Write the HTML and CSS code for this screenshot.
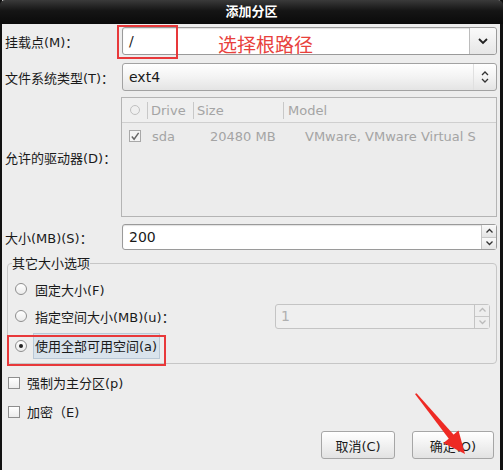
FILE: index.html
```html
<!DOCTYPE html>
<html lang="zh">
<head>
<meta charset="utf-8">
<title>添加分区</title>
<link rel="stylesheet" href="styles.css">
</head>
<body>
<div class="window">
  <div class="titlebar">添加分区</div>
  <div class="content">
    <div class="row r-mount">
      <div class="label">挂载点(M)：</div>
      <div class="combo-entry">
        <div class="entry-text">/</div>
        <div class="combo-btn">
          <svg width="12" height="8" viewBox="0 0 12 8"><path d="M2 2 L6 6 L10 2" fill="none" stroke="#222" stroke-width="1.8"/></svg>
        </div>
      </div>
    </div>
    <div class="row r-fs">
      <div class="label">文件系统类型(T)：</div>
      <div class="combo">
        <div class="entry-text">ext4</div>
        <div class="combo-arrows">
          <svg width="10" height="14" viewBox="0 0 10 14"><path d="M2 5 L5 2 L8 5 M2 9 L5 12 L8 9" fill="none" stroke="#333" stroke-width="1.3"/></svg>
        </div>
      </div>
    </div>
    <div class="row r-drives">
      <div class="label">允许的驱动器(D)：</div>
      <div class="drives">
        <div class="dhead">
          <div class="c0"><span class="hcircle"></span></div>
          <div class="c1">Drive</div>
          <div class="c2">Size</div>
          <div class="c3">Model</div>
        </div>
        <div class="drow">
          <div class="c0"><span class="dcheck"><svg width="11" height="11" viewBox="0 0 11 11"><path d="M2 5.5 L4.5 8.5 L9.5 1.5" fill="none" stroke="#666" stroke-width="1.6"/></svg></span></div>
          <div class="c1">sda</div>
          <div class="c2 num">20480 MB</div>
          <div class="c3">VMware, VMware Virtual S</div>
        </div>
      </div>
    </div>
    <div class="row r-size">
      <div class="label">大小(MB)(S)：</div>
      <div class="spin">
        <div class="entry-text">200</div>
        <div class="spin-btns">
          <div class="sb"><svg width="9" height="6" viewBox="0 0 9 6"><path d="M1.5 4.5 L4.5 1.5 L7.5 4.5" fill="none" stroke="#333" stroke-width="1.3"/></svg></div>
          <div class="sb"><svg width="9" height="6" viewBox="0 0 9 6"><path d="M1.5 1.5 L4.5 4.5 L7.5 1.5" fill="none" stroke="#333" stroke-width="1.3"/></svg></div>
        </div>
      </div>
    </div>
    <fieldset class="frame">
      <legend>其它大小选项</legend>
      <div class="opt o1"><span class="radio"></span><span class="otext">固定大小(F)</span></div>
      <div class="opt o2">
        <span class="radio"></span><span class="otext">指定空间大小(MB)(u)：</span>
        <div class="spin dis">
          <div class="entry-text">1</div>
          <div class="spin-btns">
            <div class="sb"><svg width="9" height="6" viewBox="0 0 9 6"><path d="M1.5 4.5 L4.5 1.5 L7.5 4.5" fill="none" stroke="#bbb" stroke-width="1.3"/></svg></div>
            <div class="sb"><svg width="9" height="6" viewBox="0 0 9 6"><path d="M1.5 1.5 L4.5 4.5 L7.5 1.5" fill="none" stroke="#bbb" stroke-width="1.3"/></svg></div>
          </div>
        </div>
      </div>
      <div class="opt o3"><span class="radio on"></span><span class="otext sel">使用全部可用空间(a)</span></div>
    </fieldset>
    <div class="check c-primary"><span class="box"></span><span>强制为主分区(p)</span></div>
    <div class="check c-enc"><span class="box"></span><span>加密（E)</span></div>
    <div class="buttons">
      <div class="btn b-cancel">取消(C)</div>
      <div class="btn b-ok">确定(O)</div>
    </div>
  </div>
  <div class="anno-box a1"></div>
  <div class="anno-text">选择根路径</div>
  <div class="anno-box a2"></div>
  <svg class="arrow" width="80" height="80" viewBox="0 0 80 80">
    <polygon points="2,2 3.5,1.2 42.5,44.8 37.5,49" fill="#ee2a24"/>
    <polygon points="45.5,38.5 30.5,51 52,62" fill="#ee2a24"/>
  </svg>
</div>
</body>
</html>
```

FILE: styles.css
```css
* { box-sizing: border-box; }
html, body { margin: 0; padding: 0; }
body {
  width: 503px;
  height: 470px;
  overflow: hidden;
  font-family: "DejaVu Sans", "Noto Sans CJK SC", sans-serif;
  font-size: 13px;
  color: #1a1a1a;
  background: #ededed;
}
.window {
  position: relative;
  width: 503px;
  height: 470px;
  background: #ededed;
  border-left: 2px solid #111;
  border-right: 3px solid #111;
}
.titlebar {
  height: 24px;
  margin: 0 -3px 0 -2px;
  background: linear-gradient(#3a3a3a, #151515 45%, #0a0a0a);
  border-radius: 5px 5px 0 0;
  color: #fff;
  font-weight: bold;
  font-size: 13px;
  text-align: center;
  line-height: 24px;
}
.content {
  padding: 3px 3px 0 3px;
  display: flex;
  flex-direction: column;
}
.row {
  display: grid;
  grid-template-columns: 117px 1fr;
  align-items: center;
}
.label { white-space: nowrap; padding-top: 1px; }
.entry-text { flex: 1; padding-left: 6px; font-size: 14px; }

.combo-entry {
  height: 28px;
  display: flex;
  align-items: stretch;
  background: #fff;
  border: 1px solid #9a9a9a;
  border-radius: 3px;
  box-shadow: inset 0 1px 1px rgba(0,0,0,0.12);
}
.combo-entry .entry-text { display: flex; align-items: center; }
.combo-btn {
  width: 27px;
  border-left: 1px solid #bcbcbc;
  background: linear-gradient(#fafafa, #e6e6e6);
  display: flex;
  align-items: center;
  justify-content: center;
  border-radius: 0 3px 3px 0;
}
.r-fs { margin-top: 8px; }
.combo {
  height: 28px;
  display: flex;
  align-items: center;
  background: linear-gradient(#ffffff, #f3f3f3 50%, #e4e4e4);
  border: 1px solid #a2a2a2;
  border-radius: 3px;
}
.combo-arrows {
  width: 23px;
  height: 100%;
  display: flex;
  align-items: center;
  justify-content: center;
  border-left: 1px solid #e0e0e0;
}

.r-drives { margin-top: 6px; }
.drives {
  height: 120px;
  margin-left: -1px;
  border: 1px solid #b4b4b4;
  background: #ececec;
  color: #a4a4a4;
}
.dhead, .drow {
  display: grid;
  grid-template-columns: 25px 46px 90px 1fr;
  align-items: center;
}
.dhead {
  height: 25px;
  border-bottom: 1px solid #cfcfcf;
  background: #efefef;
}
.dhead > div + div { border-left: 1px solid #c8c8c8; padding-left: 3px; height: 17px; line-height: 17px; }
.dhead .c3 { padding-left: 4px; }
.c0 { display: flex; justify-content: center; }
.hcircle {
  width: 10px; height: 10px; border-radius: 50%;
  border: 1px solid #c0c0c0;
}
.drow { height: 24px; margin-top: 1px; }
.drow .c1 { padding-left: 5px; }
.drow .c2 { padding-left: 17px; }
.drow .c3 { padding-left: 22px; white-space: nowrap; overflow: hidden; }
.dcheck {
  width: 12px; height: 12px;
  border: 1px solid #a8a8a8;
  background: #f4f4f4;
  display: flex; align-items: center; justify-content: center;
}

.r-size { margin-top: 7px; }
.spin {
  height: 26px;
  display: flex;
  align-items: center;
  background: #fff;
  border: 1px solid #9a9a9a;
  border-radius: 3px;
  box-shadow: inset 0 1px 1px rgba(0,0,0,0.12);
}
.spin-btns {
  width: 15px;
  height: 100%;
  display: flex;
  flex-direction: column;
  border-left: 1px solid #c4c4c4;
}
.sb {
  flex: 1;
  display: flex;
  align-items: center;
  justify-content: center;
  background: linear-gradient(#fafafa, #e4e4e4);
}
.sb + .sb { border-top: 1px solid #c8c8c8; }

.frame {
  margin: 6px 0 0 2px;
  padding: 4px 0 3px 5px;
  border: 1px solid #c6c6c6;
  border-radius: 4px;
  height: 108px;
}
.frame legend {
  padding: 0;
  margin-left: -1px;
  font-size: 13px;
  line-height: 15px;
}
.opt {
  height: 30px;
  display: flex;
  align-items: center;
}
.o1 { height: 24px; margin-top: 2px; }
.radio {
  width: 12px; height: 12px; border-radius: 50%;
  border: 1px solid #8e8e8e;
  background: linear-gradient(#ffffff, #ebebeb);
  margin-left: 2px;
  margin-right: 8px;
  flex: none;
  position: relative;
}
.radio.on::after {
  content: "";
  position: absolute;
  left: 3px; top: 3px;
  width: 4px; height: 4px; border-radius: 50%;
  background: #222;
}
.o2 .spin.dis {
  margin-left: auto;
  margin-right: 6px;
  width: 215px;
  height: 25px;
  background: #efefef;
  border-color: #c4c4c4;
  box-shadow: none;
  color: #b0b0b0;
}
.o2 .spin.dis .sb { background: #eeeeee; }
.o2 .spin.dis .entry-text { padding-left: 5px; }
.otext.sel {
  background: #d9e3ec;
  border: 1px solid #b9c8d6;
  padding: 2px 2px 3px 1px;
  margin-left: -2px;
}

.check {
  display: flex;
  align-items: center;
  height: 29px;
  padding-left: 3px;
}
.c-primary { margin-top: 4px; }
.box {
  width: 12px; height: 12px;
  border: 1px solid #8e8e8e;
  background: linear-gradient(#ffffff, #ececec);
  margin-right: 7px;
}
.buttons {
  display: flex;
  justify-content: flex-end;
  gap: 17px;
  margin-top: 5px;
  padding-right: 3px;
}
.btn {
  height: 28px;
  border: 1px solid #a6a6a6;
  border-radius: 3px;
  background: linear-gradient(#ffffff, #f1f1f1 50%, #e2e2e2);
  display: flex;
  align-items: center;
  justify-content: center;
}
.b-cancel { width: 74px; }
.b-ok { width: 82px; }

.anno-box {
  position: absolute;
  border: 2px solid #e8383a;
}
.a1 { left: 115px; top: 25px; width: 61px; height: 34px; }
.a2 { left: 5px; top: 335px; width: 159px; height: 31px; }
.anno-text {
  position: absolute;
  left: 216px;
  top: 32px;
  font-family: "Noto Sans CJK SC", sans-serif;
  font-size: 19px;
  color: #e8413c;
  line-height: 24px;
}
.arrow {
  position: absolute;
  left: 411px;
  top: 392px;
}
```
